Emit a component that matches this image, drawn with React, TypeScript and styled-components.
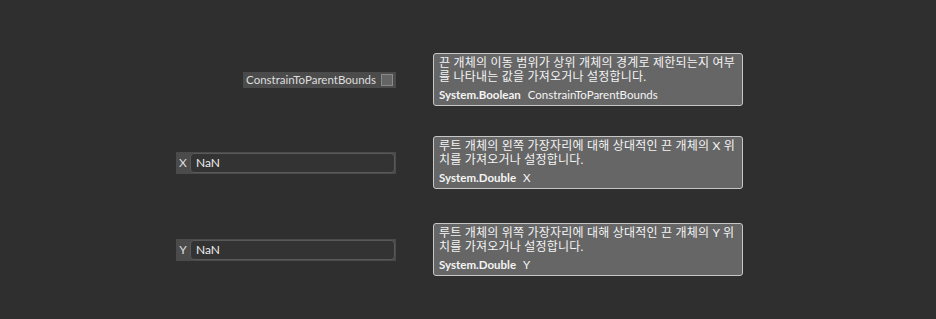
import React, { FC } from "react"
import styled, { createGlobalStyle } from "styled-components"

const GlobalStyle = createGlobalStyle`
  html, body {
    margin: 0;
    padding: 0;
    background: #2f2f2f;
  }
  body {
    font-family: Lato, "Noto Sans CJK KR", sans-serif;
    font-size: 11.5px;
    color: #e8e8e8;
  }
`

const Page = styled.div`
  width: 936px;
  height: 319px;
  padding-top: 53px;
  box-sizing: border-box;
`

const Row = styled.div<{ $gap: number }>`
  display: grid;
  grid-template-columns: 396px 310px;
  column-gap: 37px;
  align-items: center;
  margin-top: ${p => p.$gap}px;
`

const Control = styled.div`
  display: flex;
  justify-content: flex-end;
`

const CheckField = styled.label`
  display: flex;
  align-items: center;
  height: 16px;
  background: #4b4b4b;
  padding: 0 3px 0 3px;
  color: #dedede;
  line-height: 16px;
`

const CheckBox = styled.span`
  width: 10px;
  height: 10px;
  margin-left: 5px;
  background: #646464;
  border: 1px solid #8a8a8a;
`

const NumberField = styled.div`
  display: flex;
  align-items: stretch;
  width: 220px;
  height: 22px;
  box-sizing: border-box;
  background: #4b4b4b;
  padding: 1px 1px 1px 0;
  font-size: 12px;
`

const FieldName = styled.span`
  width: 14px;
  text-align: center;
  line-height: 20px;
  color: #dedede;
`

const FieldInput = styled.div`
  flex: 1;
  box-sizing: border-box;
  border: 1px solid #595959;
  border-radius: 4px;
  background: #333333;
  padding-left: 5px;
  line-height: 18px;
  color: #eeeeee;
`

const Tip = styled.div`
  box-sizing: border-box;
  width: 310px;
  background: #666666;
  border: 1px solid #c6c6c6;
  border-radius: 3px;
  padding: 2px 4px 3px 5px;
  line-height: 14px;
  color: #f4f4f4;
`

const TipText = styled.div`
  font-size: 12px;
  line-height: 14px;
  letter-spacing: 0.2px;
`

const TipSig = styled.div`
  margin-top: 4px;
  white-space: pre;
  font-size: 11.5px;
`

const TypeName = styled.b`
  font-weight: bold;
  margin-right: 7px;
`

type Prop = {
  gap: number
  control: React.ReactNode
  text: string
  type: string
  name: string
}

const props: Prop[] = [
  {
    gap: 0,
    control: (
      <CheckField>
        ConstrainToParentBounds
        <CheckBox />
      </CheckField>
    ),
    text: "끈 개체의 이동 범위가 상위 개체의 경계로 제한되는지 여부를 나타내는 값을 가져오거나 설정합니다.",
    type: "System.Boolean",
    name: "ConstrainToParentBounds"
  },
  {
    gap: 30,
    control: (
      <NumberField>
        <FieldName>X</FieldName>
        <FieldInput>NaN</FieldInput>
      </NumberField>
    ),
    text: "루트 개체의 왼쪽 가장자리에 대해 상대적인 끈 개체의 X 위치를 가져오거나 설정합니다.",
    type: "System.Double",
    name: "X"
  },
  {
    gap: 34,
    control: (
      <NumberField>
        <FieldName>Y</FieldName>
        <FieldInput>NaN</FieldInput>
      </NumberField>
    ),
    text: "루트 개체의 위쪽 가장자리에 대해 상대적인 끈 개체의 Y 위치를 가져오거나 설정합니다.",
    type: "System.Double",
    name: "Y"
  }
]

const App: FC = () => (
  <Page>
    <GlobalStyle />
    { props.map(p => (
      <Row key={ p.name } $gap={ p.gap }>
        <Control>{ p.control }</Control>
        <Tip>
          <TipText>{ p.text }</TipText>
          <TipSig>
            <TypeName>{ p.type }</TypeName>
            { p.name }
          </TipSig>
        </Tip>
      </Row>
    )) }
  </Page>
)

export default App
